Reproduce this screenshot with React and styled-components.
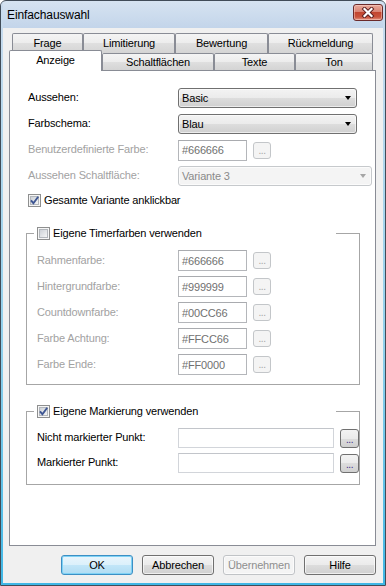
import React from "react";
import styled, { createGlobalStyle } from "styled-components";

const GlobalStyle = createGlobalStyle`
  html, body {
    margin: 0;
    padding: 0;
    background: #ffffff;
  }
  body {
    font-family: "Liberation Sans", Arial, sans-serif;
    font-size: 11px;
    letter-spacing: -0.15px;
    color: #000000;
  }
  * {
    box-sizing: border-box;
  }
`;

const Window = styled.div`
  width: 386px;
  height: 586px;
  display: flex;
  flex-direction: column;
  border: 1px solid #414c58;
  border-radius: 6px 6px 0 0;
  background: linear-gradient(to bottom, #d6e3f1 0, #c3d5ea 27px, #d6e2ee 220px, #e8edf2 100%);
  overflow: hidden;
`;

const Frame = styled.div`
  flex: 1;
  display: flex;
  flex-direction: column;
  border-style: solid;
  border-width: 0 2px 2px 2px;
  border-image: linear-gradient(to bottom, #cbdcee, #8fd0ec 60%, #3fb7e6) 1;
`;

const TitleBar = styled.div`
  height: 27px;
  display: flex;
  align-items: center;
  justify-content: space-between;
  padding: 0 0 0 4px;
`;

const Title = styled.span`
  font-size: 12px;
  letter-spacing: -0.1px;
  color: #000;
`;

const CloseButton = styled.div`
  align-self: flex-start;
  margin-top: 3px;
  width: 30px;
  height: 17px;
  border: 1px solid #6b2a2a;
  border-radius: 3px;
  background: linear-gradient(to bottom, #e9a99a 0, #d98474 45%, #c2452f 50%, #c9533c 80%, #e39583 100%);
  box-shadow: inset 0 0 0 1px rgba(255, 220, 210, 0.45);
  display: flex;
  align-items: center;
  justify-content: center;
`;

const Client = styled.div`
  flex: 1;
  background: #f0f0f0;
  padding: 5px 7px 0 6px;
  display: flex;
  flex-direction: column;
`;

const TabRow = styled.div`
  display: flex;
  align-items: flex-end;
  height: 20px;
  padding-left: ${p => p.$indent}px;
  margin-top: ${p => p.$overlap}px;
  position: relative;
  z-index: ${p => p.$layer};
`;

const Tab = styled.div`
  width: ${p => p.$w}px;
  height: ${p => (p.$active ? 21 : p.$back ? 20 : 17)}px;
  margin-bottom: ${p => (p.$active ? -1 : 0)}px;
  border: 1px solid #898c95;
  border-bottom: none;
  border-radius: 2px 2px 0 0;
  background: ${p =>
    p.$active
      ? "#ffffff"
      : "linear-gradient(to bottom, #f4f4f4 0, #ececec 50%, #dfdfdf 50%, #d4d4d4 100%)"};
  display: flex;
  align-items: center;
  justify-content: center;
  padding-bottom: ${p => (p.$active ? 3 : 1)}px;
  white-space: nowrap;
`;

const Panel = styled.div`
  height: 476px;
  border: 1px solid #898c95;
  background: #ffffff;
  padding: 17px 0 0 18px;
`;

const FormGrid = styled.div`
  display: grid;
  grid-template-columns: ${p => p.$label}px auto;
  grid-auto-rows: ${p => p.$row}px;
  row-gap: ${p => p.$gap}px;
  align-items: center;
`;

const Label = styled.span`
  color: ${p => (p.$disabled ? "#a2a2a2" : "#000000")};
  white-space: nowrap;
  padding-bottom: 2px;
`;

const Combo = styled.div`
  width: ${p => p.$w}px;
  height: 20px;
  border: 1px solid ${p => (p.$disabled ? "#c6c9cc" : "#707070")};
  border-radius: 3px;
  background: ${p =>
    p.$disabled
      ? "#f4f4f4"
      : "linear-gradient(to bottom, #f3f3f3 0, #ebebeb 50%, #dddddd 50%, #d0d0d0 100%)"};
  box-shadow: inset 0 0 0 1px rgba(255, 255, 255, 0.6);
  color: ${p => (p.$disabled ? "#8a8a8a" : "#000000")};
  display: flex;
  align-items: center;
  justify-content: space-between;
  padding: 0 5px 0 3px;
`;

const Arrow = styled.span`
  width: 0;
  height: 0;
  border-left: 3.5px solid transparent;
  border-right: 3.5px solid transparent;
  border-top: 4px solid ${p => (p.$disabled ? "#a5a5a5" : "#000000")};
`;

const FieldRow = styled.div`
  display: flex;
  align-items: center;
  gap: 6px;
`;

const TextBox = styled.div`
  width: ${p => p.$w}px;
  height: ${p => p.$h}px;
  border: 1px solid ${p => (p.$empty ? "#d2d5da" : "#b4b6ba")};
  border-top-color: ${p => (p.$empty ? "#c2c5ca" : "#a9abaf")};
  background: #ffffff;
  color: #707070;
  display: flex;
  align-items: center;
  padding-left: 3px;
`;

const DotsButton = styled.div`
  width: ${p => (p.$enabled ? 19 : 18)}px;
  height: ${p => (p.$enabled ? 19 : 17)}px;
  border: 1px solid ${p => (p.$enabled ? "#707070" : "#c3c6c9")};
  border-radius: 3px;
  background: ${p =>
    p.$enabled
      ? "linear-gradient(to bottom, #f3f3f3 0, #ebebeb 50%, #dddddd 50%, #d0d0d0 100%)"
      : "#f4f4f4"};
  color: ${p => (p.$enabled ? "#3a2a8c" : "#a5a5a5")};
  display: flex;
  align-items: flex-end;
  justify-content: center;
  font-size: 10px;
  line-height: 10px;
  padding-bottom: 2px;
  letter-spacing: -0.5px;
`;

const CheckRow = styled.label`
  display: flex;
  align-items: center;
  gap: 3px;
  height: 14px;
  margin-top: 7px;
`;

const Group = styled.fieldset`
  width: 334px;
  margin: 19px 0 0 -2px;
  padding: 0;
  border: 1px solid #a6a6a6;
  min-width: 0;
`;

const Legend = styled.legend`
  width: 302px;
  height: 14px;
  margin-left: 7px;
  padding: 0 0 0 3px;
  display: flex;
  align-items: center;
  gap: 3px;
  background: #ffffff;
`;

const GroupBody = styled.div`
  padding: 10px 0 ${p => p.$bottom}px 10px;
`;

const ButtonRow = styled.div`
  display: flex;
  justify-content: flex-end;
  gap: 9px;
  margin-top: 9px;
`;

const DialogButton = styled.div`
  width: 72px;
  height: 20px;
  border: 1px solid ${p => (p.$default ? "#3c8fc4" : p.$disabled ? "#c0c3c6" : "#707070")};
  border-radius: 3px;
  background: ${p =>
    p.$default
      ? "linear-gradient(to bottom, #e9f5fc 0, #dbf0fb 50%, #c2e6f8 50%, #b0dcf3 100%)"
      : p.$disabled
      ? "#f4f4f4"
      : "linear-gradient(to bottom, #f3f3f3 0, #ebebeb 50%, #dddddd 50%, #d0d0d0 100%)"};
  box-shadow: inset 0 0 0 1px ${p => (p.$default ? "#7fd2f5" : "rgba(255, 255, 255, 0.65)")};
  color: ${p => (p.$disabled ? "#8f8f8f" : "#000000")};
  display: flex;
  align-items: center;
  justify-content: center;
`;

const CheckBox = ({ checked, id }) => (
  <svg width="13" height="13" viewBox="0 0 13 13">
    <defs>
      <linearGradient id={id} x1="0" y1="0" x2="1" y2="1">
        <stop offset="0" stopColor="#cbcfd5" />
        <stop offset="1" stopColor="#f7f7f7" />
      </linearGradient>
    </defs>
    <rect x="0.5" y="0.5" width="12" height="12" fill="#f6f6f6" stroke="#8e8f8f" />
    <rect x="2.5" y="2.5" width="8" height="8" fill={`url(#${id})`} stroke="#b3b7bc" />
    {checked && (
      <path d="M3 6.4 L5.4 9.2 L10.2 2.8" fill="none" stroke="#3e5693" strokeWidth="1.9" />
    )}
  </svg>
);

const CloseIcon = () => (
  <svg width="14" height="11" viewBox="0 0 14 11">
    <path d="M3.5 2 L10.5 9 M10.5 2 L3.5 9" stroke="#5a1d1d" strokeWidth="4" strokeLinecap="square" />
    <path d="M3.5 2 L10.5 9 M10.5 2 L3.5 9" stroke="#ffffff" strokeWidth="2.2" strokeLinecap="square" />
  </svg>
);

const timerColors = [
  ["Rahmenfarbe:", "#666666"],
  ["Hintergrundfarbe:", "#999999"],
  ["Countdownfarbe:", "#00CC66"],
  ["Farbe Achtung:", "#FFCC66"],
  ["Farbe Ende:", "#FF0000"],
];

const App = () => {
  return (
    <>
      <GlobalStyle />
      <Window>
        <Frame>
          <TitleBar>
            <Title>Einfachauswahl</Title>
            <CloseButton>
              <CloseIcon />
            </CloseButton>
          </TitleBar>
          <Client>
            <TabRow $indent={3} $overlap={0} $layer={0}>
              <Tab $w={71} $back>Frage</Tab>
              <Tab $w={92} $back>Limitierung</Tab>
              <Tab $w={93} $back>Bewertung</Tab>
              <Tab $w={105} $back>Rückmeldung</Tab>
            </TabRow>
            <TabRow $indent={0} $overlap={-3} $layer={1}>
              <Tab $w={93} $active>Anzeige</Tab>
              <Tab $w={112}>Schaltflächen</Tab>
              <Tab $w={81}>Texte</Tab>
              <Tab $w={78}>Ton</Tab>
            </TabRow>
            <Panel>
              <FormGrid $label={150} $row={20} $gap={6}>
                <Label>Aussehen:</Label>
                <Combo $w={179}>
                  <span>Basic</span>
                  <Arrow />
                </Combo>
                <Label>Farbschema:</Label>
                <Combo $w={179}>
                  <span>Blau</span>
                  <Arrow />
                </Combo>
                <Label $disabled>Benutzerdefinierte Farbe:</Label>
                <FieldRow>
                  <TextBox $w={69} $h={21}>#666666</TextBox>
                  <DotsButton>...</DotsButton>
                </FieldRow>
                <Label $disabled>Aussehen Schaltfläche:</Label>
                <Combo $w={194} $disabled>
                  <span>Variante 3</span>
                  <Arrow $disabled />
                </Combo>
              </FormGrid>
              <CheckRow>
                <CheckBox checked id="cb1" />
                <span>Gesamte Variante anklickbar</span>
              </CheckRow>
              <Group>
                <Legend>
                  <CheckBox id="cb2" />
                  <span>Eigene Timerfarben verwenden</span>
                </Legend>
                <GroupBody $bottom={9}>
                  <FormGrid $label={141} $row={21} $gap={5}>
                    {timerColors.map(([label, value]) => (
                      <React.Fragment key={label}>
                        <Label $disabled>{label}</Label>
                        <FieldRow>
                          <TextBox $w={69} $h={21}>{value}</TextBox>
                          <DotsButton>...</DotsButton>
                        </FieldRow>
                      </React.Fragment>
                    ))}
                  </FormGrid>
                </GroupBody>
              </Group>
              <Group>
                <Legend>
                  <CheckBox checked id="cb3" />
                  <span>Eigene Markierung verwenden</span>
                </Legend>
                <GroupBody $bottom={11}>
                  <FormGrid $label={141} $row={20} $gap={5}>
                    <Label>Nicht markierter Punkt:</Label>
                    <FieldRow>
                      <TextBox $w={156} $h={20} $empty />
                      <DotsButton $enabled>...</DotsButton>
                    </FieldRow>
                    <Label>Markierter Punkt:</Label>
                    <FieldRow>
                      <TextBox $w={156} $h={20} $empty />
                      <DotsButton $enabled>...</DotsButton>
                    </FieldRow>
                  </FormGrid>
                </GroupBody>
              </Group>
            </Panel>
            <ButtonRow>
              <DialogButton $default>OK</DialogButton>
              <DialogButton>Abbrechen</DialogButton>
              <DialogButton $disabled>Übernehmen</DialogButton>
              <DialogButton>Hilfe</DialogButton>
            </ButtonRow>
          </Client>
        </Frame>
      </Window>
    </>
  );
};

export default App;
